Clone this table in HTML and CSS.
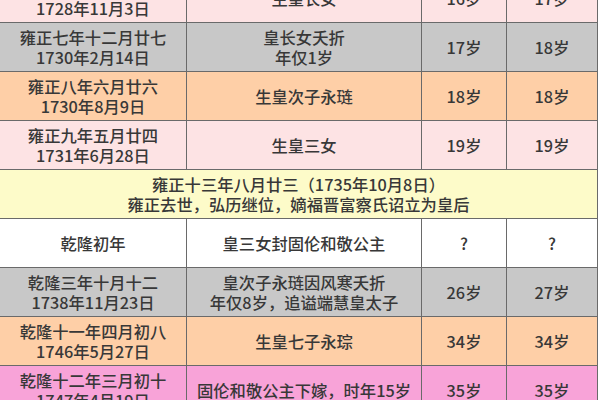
FILE: index.html
```html
<!DOCTYPE html>
<html lang="zh-CN">
<head>
<meta charset="utf-8">
<link rel="stylesheet" href="styles.css">
</head>
<body>
<table class="timeline">
  <colgroup>
    <col class="c-date">
    <col class="c-event">
    <col class="c-age1">
    <col class="c-age2">
  </colgroup>
  <tbody>
    <tr class="r-pink">
      <td>雍正六年十月初三<br>1728年11月3日</td>
      <td>生皇长女</td>
      <td>16岁</td>
      <td>17岁</td>
    </tr>
    <tr class="r-gray">
      <td>雍正七年十二月廿七<br>1730年2月14日</td>
      <td>皇长女夭折<br>年仅1岁</td>
      <td>17岁</td>
      <td>18岁</td>
    </tr>
    <tr class="r-orange">
      <td>雍正八年六月廿六<br>1730年8月9日</td>
      <td>生皇次子永琏</td>
      <td>18岁</td>
      <td>18岁</td>
    </tr>
    <tr class="r-pink">
      <td>雍正九年五月廿四<br>1731年6月28日</td>
      <td>生皇三女</td>
      <td>19岁</td>
      <td>19岁</td>
    </tr>
    <tr class="r-yellow">
      <td colspan="4">雍正十三年八月廿三（1735年10月8日）<br>雍正去世，弘历继位，嫡福晋富察氏诏立为皇后</td>
    </tr>
    <tr class="r-white">
      <td>乾隆初年</td>
      <td>皇三女封固伦和敬公主</td>
      <td>?</td>
      <td>?</td>
    </tr>
    <tr class="r-gray">
      <td>乾隆三年十月十二<br>1738年11月23日</td>
      <td>皇次子永琏因风寒夭折<br>年仅8岁，追谥端慧皇太子</td>
      <td>26岁</td>
      <td>27岁</td>
    </tr>
    <tr class="r-orange">
      <td>乾隆十一年四月初八<br>1746年5月27日</td>
      <td>生皇七子永琮</td>
      <td>34岁</td>
      <td>34岁</td>
    </tr>
    <tr class="r-hot">
      <td>乾隆十二年三月初十<br>1747年4月19日</td>
      <td>固伦和敬公主下嫁，时年15岁</td>
      <td>35岁</td>
      <td>35岁</td>
    </tr>
  </tbody>
</table>
</body>
</html>
```
FILE: styles.css
```css
html, body {
  margin: 0;
  padding: 0;
  background: #ffffff;
  overflow: hidden;
}
body {
  font-family: "Noto Sans CJK SC", "Noto Sans", sans-serif;
  font-weight: 500;
  color: #383838;
  font-size: 16.3px;
  line-height: 20px;
}
.timeline {
  border-collapse: collapse;
  table-layout: fixed;
  width: 598px;
  margin-top: -27px;
  margin-left: -1px;
}
.c-date { width: 187px; }
.c-event { width: 235px; }
.c-age1 { width: 85px; }
.c-age2 { width: 91px; }
.timeline td {
  border: 1px solid #6a6a6a;
  height: 49px;
  padding: 0 4px;
  text-align: center;
  vertical-align: middle;
  box-sizing: border-box;
}
.r-pink td { background: #fde3e4; }
.r-gray td { background: #c8c8c8; }
.r-orange td { background: #fecfa7; }
.r-yellow td { background: #fdfbc9; }
.r-white td { background: #ffffff; }
.r-hot td { background: #f8a3d8; }
```
